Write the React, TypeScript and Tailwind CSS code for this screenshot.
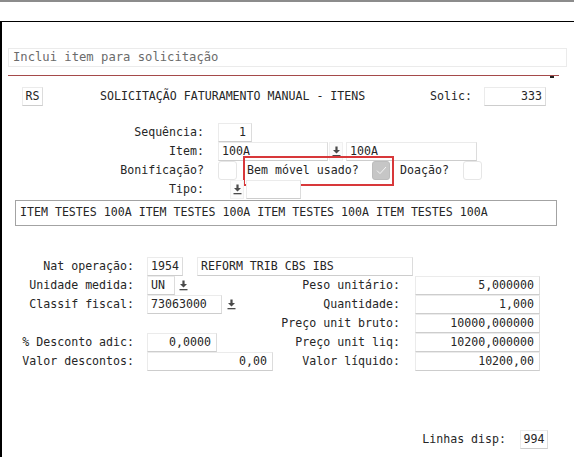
import React from "react";

const mono = "font-['DejaVu_Sans_Mono','Liberation_Mono',monospace] text-[11.6px] leading-none text-[#262626]";

const Box: React.FC<{ className?: string; right?: boolean; children?: React.ReactNode }> = ({
  className = "",
  right,
  children,
}) => (
  <div
    className={`h-[19px] flex items-center pt-px bg-white border border-[#ebebeb] border-b-[#cdcdcd] border-r-[#dcdcdc] px-[3px] ${
      right ? "justify-end" : ""
    } ${className}`}
  >
    {children}
  </div>
);

const Arrow = () => (
  <svg width="9" height="11" viewBox="0 0 9 11">
    <path d="M3.4 0.5h2.2v3.6h2.4L4.5 7.6 1 4.1h2.4z" fill="#4a4a4a" />
    <rect x="0.5" y="9" width="8" height="1.3" fill="#4a4a4a" />
  </svg>
);

const ArrowBox: React.FC<{ className?: string }> = ({ className = "" }) => (
  <div className={`h-[19px] w-[14px] flex items-center justify-center border border-[#f0f0f0] bg-[#fbfbfb] ${className}`}>
    <Arrow />
  </div>
);

const Check: React.FC<{ checked?: boolean; className?: string }> = ({ checked, className = "" }) =>
  checked ? (
    <div className={`h-[19px] w-[18px] rounded-[3px] bg-[#c6c6c6] border border-[#bcbcbc] flex items-center justify-center ${className}`}>
      <svg width="11" height="9" viewBox="0 0 11 9">
        <path d="M1 4.6 4 7.6 10 1" fill="none" stroke="#f4f4f4" strokeWidth="1" />
      </svg>
    </div>
  ) : (
    <div className={`h-[19px] w-[19px] rounded-[3px] bg-white border border-[#e6e6e6] ${className}`} />
  );

const Label: React.FC<{ w: string; children: React.ReactNode }> = ({ w, children }) => (
  <span className={`${w} text-right whitespace-pre pt-px`}>{children}</span>
);

export default function App() {
  return (
    <div className={`w-[574px] h-[457px] bg-white overflow-hidden flex flex-col ${mono}`}>
      <div className="h-[22px] shrink-0 border-t-2 border-t-[#8c8c8c] border-b border-b-black" />
      <div className="flex-1 border-l-2 border-black flex flex-col pt-[26px]">
        {/* busca */}
        <div className="ml-[6px] w-[559px] h-[19px] flex items-center border border-[#ebebeb] px-[4px] text-[12.2px] text-[#6b6b6b]">
          Inclui item para solicitação
        </div>
        <div className="ml-[6px] mt-[8px] w-[551px] h-px bg-[#a54a4a]" />
        <div className="ml-[548px] w-[4px] h-[2px] bg-[#222]" />

        {/* cabeçalho */}
        <div className="mt-[9px] flex items-center h-[19px]">
          <Box className="ml-[20px] w-[21px] justify-center !px-0">RS</Box>
          <span className="ml-[57px] w-[273px] whitespace-pre">SOLICITAÇÃO FATURAMENTO MANUAL - ITENS</span>
          <span className="ml-[57px] w-[42px]">Solic:</span>
          <Box right className="ml-[12px] w-[62px]">333</Box>
        </div>

        {/* dados do item */}
        <div className="mt-[17px] flex items-center h-[19px]">
          <Label w="w-[202px]">Sequência:</Label>
          <Box right className="ml-[14px] w-[34px] pr-[5px]">1</Box>
        </div>
        <div className="flex items-center h-[19px]">
          <Label w="w-[202px]">Item:</Label>
          <Box className="ml-[14px] w-[110px]">100A</Box>
          <ArrowBox className="ml-[1px]" />
          <Box className="ml-[3px] w-[131px]">100A</Box>
        </div>
        <div className="flex items-center h-[19px]">
          <Label w="w-[202px]">Bonificação?</Label>
          <Check className="ml-[14px]" />
          <div className="ml-[6px] -my-[5px] w-[151px] h-[30px] border-2 border-[#d8383a] flex items-center pl-[2px] pr-[2px]">
            <span className="whitespace-pre pt-px">Bem móvel usado?</span>
            <Check checked className="ml-auto" />
          </div>
          <span className="ml-[6px] pt-px">Doação?</span>
          <Check className="ml-[14px] w-[18px]" />
        </div>
        <div className="flex items-center h-[19px]">
          <Label w="w-[202px]">Tipo:</Label>
          <ArrowBox className="ml-[26px]" />
          <Box className="ml-[2px] w-[55px]" />
        </div>
        <div className="mt-px ml-[13px] w-[542px] h-[26px] border border-[#a3a3a3] flex items-center px-[4px] whitespace-pre">
          ITEM TESTES 100A ITEM TESTES 100A ITEM TESTES 100A ITEM TESTES 100A
        </div>

        {/* valores */}
        <div className="mt-[31px] flex items-center h-[19px]">
          <Label w="w-[132px]">Nat operação:</Label>
          <Box className="ml-[13px] w-[36px]">1954</Box>
          <Box className="ml-[14px] w-[216px]">REFORM TRIB CBS IBS</Box>
        </div>
        <div className="flex items-center h-[19px]">
          <div className="w-[279px] flex items-center">
            <Label w="w-[132px]">Unidade medida:</Label>
            <Box className="ml-[13px] w-[28px]">UN</Box>
            <div className="ml-[4px]">
              <Arrow />
            </div>
          </div>
          <Label w="w-[119px]">Peso unitário:</Label>
          <Box right className="ml-[15px] w-[125px] pr-[5px]">5,000000</Box>
        </div>
        <div className="flex items-center h-[19px]">
          <div className="w-[279px] flex items-center">
            <Label w="w-[132px]">Classif fiscal:</Label>
            <Box className="ml-[13px] w-[75px]">73063000</Box>
            <div className="ml-[5px]">
              <Arrow />
            </div>
          </div>
          <Label w="w-[119px]">Quantidade:</Label>
          <Box right className="ml-[15px] w-[125px] pr-[5px]">1,000</Box>
        </div>
        <div className="flex items-center h-[19px]">
          <div className="w-[279px]" />
          <Label w="w-[119px]">Preço unit bruto:</Label>
          <Box right className="ml-[15px] w-[125px] pr-[5px]">10000,000000</Box>
        </div>
        <div className="flex items-center h-[19px]">
          <div className="w-[279px] flex items-center">
            <Label w="w-[132px]">% Desconto adic:</Label>
            <Box right className="ml-[13px] w-[70px] pr-[5px]">0,0000</Box>
          </div>
          <Label w="w-[119px]">Preço unit liq:</Label>
          <Box right className="ml-[15px] w-[125px] pr-[5px]">10200,000000</Box>
        </div>
        <div className="flex items-center h-[19px]">
          <div className="w-[279px] flex items-center">
            <Label w="w-[132px]">Valor descontos:</Label>
            <Box right className="ml-[13px] w-[126px] pr-[5px]">0,00</Box>
          </div>
          <Label w="w-[119px]">Valor líquido:</Label>
          <Box right className="ml-[15px] w-[125px] pr-[5px]">10200,00</Box>
        </div>

        <div className="mt-[59px] flex items-center h-[19px]">
          <span className="ml-[418px] w-[86px] text-right pt-px">Linhas disp:</span>
          <Box className="ml-[14px] w-[28px] justify-center !px-0">994</Box>
        </div>
      </div>
    </div>
  );
}
